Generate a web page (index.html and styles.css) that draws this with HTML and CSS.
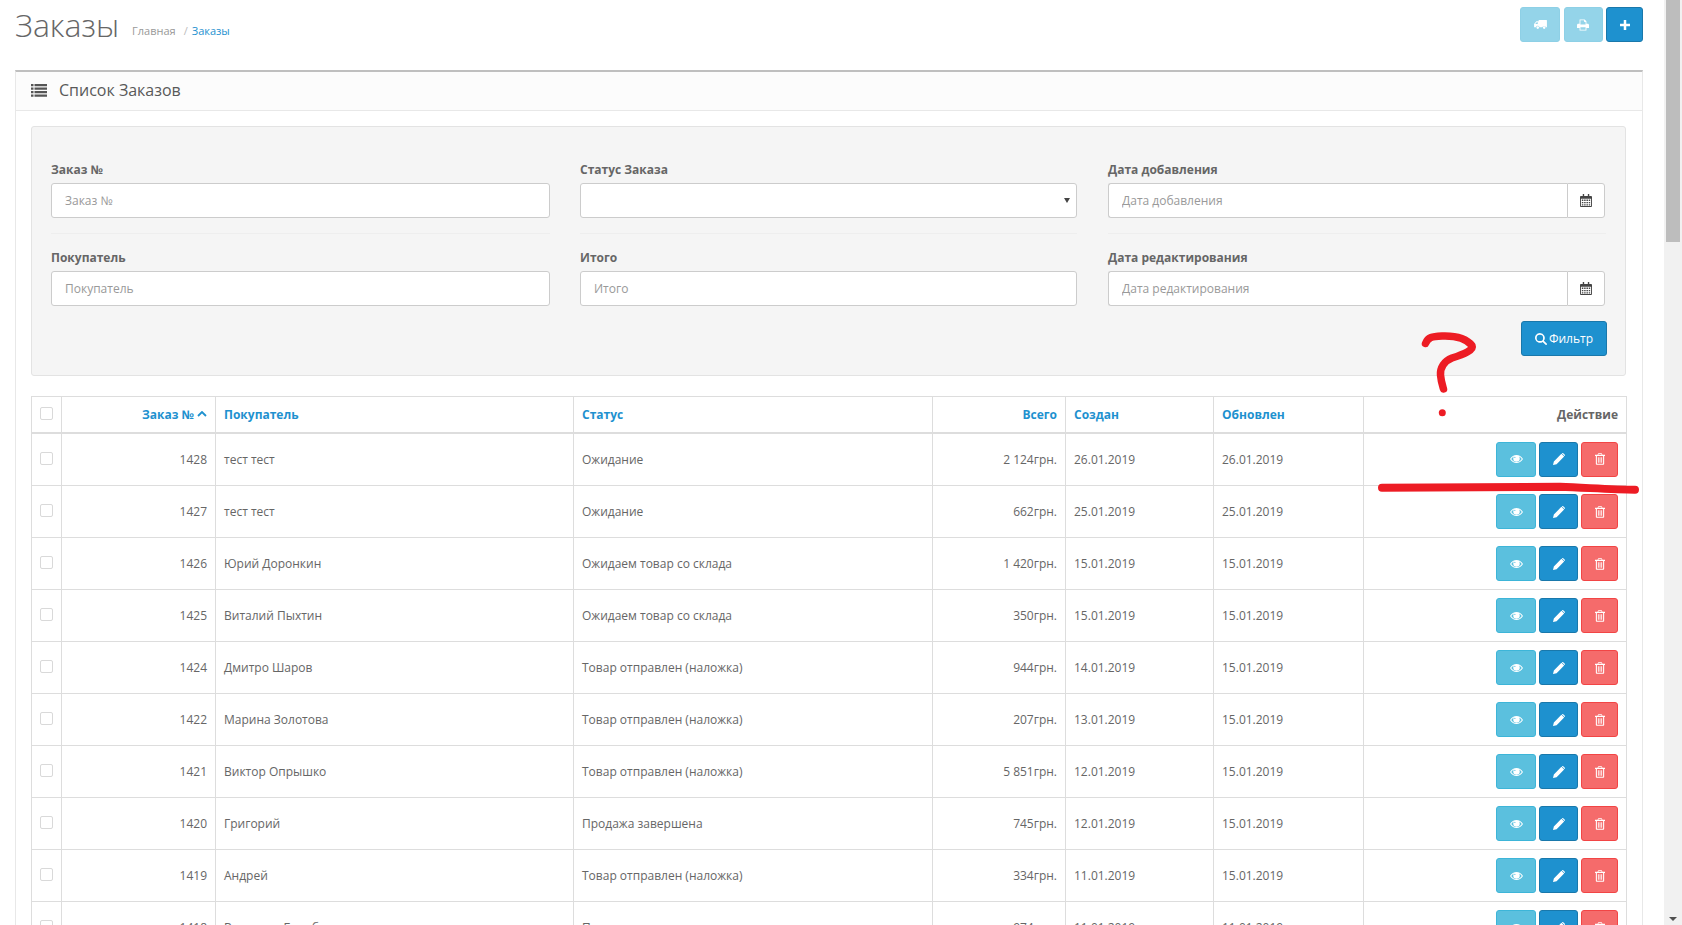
FILE: index.html
```html
<!DOCTYPE html>
<html lang="ru">
<head>
<meta charset="utf-8">
<title>Заказы</title>
<link rel="stylesheet" href="styles.css">
</head>
<body>
<svg width="0" height="0" class="defs">
  <symbol id="i-eye" viewBox="0 0 16 12"><path fill-rule="evenodd" d="M0 6C2 2.6 4.8 1 8 1s6 1.6 8 5c-2 3.400-4.800 5-8 5S2 9.400 0 6zm1.500 0C3 8.500 5.300 9.800 8 9.800S13 8.500 14.500 6c-.9-1.400-2-2.400-3.300-3 .5.700.8 1.500.8 2.300A4 4 0 0 1 8 9.300a4 4 0 0 1-4-4c0-.8.300-1.600.8-2.300C3.500 3.600 2.400 4.600 1.500 6zM6 3.300a.7.700 0 0 0 0 1.400.7.700 0 0 0 0-1.400z"/></symbol>
  <symbol id="i-pencil" viewBox="0 0 14 14"><path d="M0 14l1-4.200L9.800 1l3.200 3.200L4.200 13zM10.700.2c.4-.3.900-.3 1.200 0l1.900 1.900c.3.300.3.800 0 1.200l-.3.300-3.100-3.100z"/></symbol>
  <symbol id="i-trash" viewBox="0 0 12 14"><path fill-rule="evenodd" d="M4 0h4l1 2h3v1.300h-1V13c0 .6-.4 1-1 1H2c-.6 0-1-.4-1-1V3.300H0V2h3zm.4 1L4 2h4l-.4-1zM2.300 3.300v9.400h7.400V3.300zM3.500 5h1v6.500h-1zm2 0h1v6.500h-1zm2 0h1v6.500h-1z"/></symbol>
  <symbol id="i-truck" viewBox="0 0 14 12"><path d="M5 1h8.500c.3 0 .5.200.5.500V9h-1.100a2 2 0 0 0-3.800 0H5.900A2 2 0 0 0 2 9H0V5.500L2.500 2.500H5zM1.200 5.500H4V3.500H2.900zM4 8a1.400 1.400 0 1 1 0 2.800A1.400 1.400 0 0 1 4 8zm7 0a1.400 1.400 0 1 1 0 2.800A1.400 1.400 0 0 1 11 8z"/></symbol>
  <symbol id="i-print" viewBox="0 0 14 13"><path fill-rule="evenodd" d="M3 0h6l2 2v3h1.500c.8 0 1.500.7 1.500 1.500V10h-3v3H3v-3H0V6.500C0 5.700.7 5 1.500 5H3zm1 1v5h6V3H8.500L8 1zM4 9v3h6V9z"/></symbol>
  <symbol id="i-plus" viewBox="0 0 12 12"><path d="M4.500 0h3v4.500H12v3H7.500V12h-3V7.500H0v-3h4.500z"/></symbol>
  <symbol id="i-cal" viewBox="0 0 13 14"><path fill-rule="evenodd" d="M3 0h1.500v2h4V0H10v2h2c.6 0 1 .4 1 1v10c0 .6-.4 1-1 1H1c-.6 0-1-.4-1-1V3c0-.6.4-1 1-1h2zM1 5v8h11V5zm1 1h1.600v1.500H2zm2.500 0h1.600v1.500H4.500zm2.500 0h1.600v1.500H7zm2.500 0H11v1.500H9.500zM2 8.500h1.600V10H2zm2.500 0h1.600V10H4.500zm2.500 0h1.600V10H7zm2.500 0H11V10H9.500zM2 11h1.600v1.300H2zm2.500 0h1.600v1.300H4.500zm2.500 0h1.600v1.300H7zm2.500 0H11v1.300H9.500z"/></symbol>
  <symbol id="i-list" viewBox="0 0 16 13"><path d="M0 0h2.500v2.300H0zm3.500 0H16v2.300H3.500zM0 3.500h2.500v2.300H0zm3.500 0H16v2.300H3.500zM0 7h2.500v2.300H0zM3.500 7H16v2.300H3.500zM0 10.500h2.500v2.300H0zm3.500 0H16v2.300H3.500z"/></symbol>
  <symbol id="i-search" viewBox="0 0 13 13"><path fill-rule="evenodd" d="M5.300 0a5.300 5.300 0 0 1 4.300 8.400l3.100 3.100c.4.400.4 1 0 1.300-.4.300-.9.300-1.300 0L8.300 9.700A5.300 5.300 0 1 1 5.300 0zm0 1.800a3.500 3.500 0 1 0 0 7 3.500 3.500 0 0 0 0-7z"/></symbol>
</svg>

<div class="app">
  <main class="main">
    <header class="page-header">
      <div class="title-wrap">
        <h1 class="title">Заказы</h1>
        <ul class="crumbs">
          <li class="crumb">Главная</li>
          <li class="crumb-sep">/</li>
          <li class="crumb-link">Заказы</li>
        </ul>
      </div>
      <div class="head-actions">
        <button class="btn btn-faded btn-w40"><svg class="ic ic-truck"><use href="#i-truck"/></svg></button>
        <button class="btn btn-faded btn-w39"><svg class="ic ic-print"><use href="#i-print"/></svg></button>
        <button class="btn btn-primary btn-w37"><svg class="ic ic-plus"><use href="#i-plus"/></svg></button>
      </div>
    </header>

    <section class="panel">
      <div class="panel-heading">
        <svg class="ic-list"><use href="#i-list"/></svg>
        <h3 class="panel-title">Список Заказов</h3>
      </div>
      <div class="panel-body">
        <form class="well">
          <div class="filter-grid">
            <div class="field">
              <label class="label">Заказ №</label>
              <input class="input" placeholder="Заказ №">
            </div>
            <div class="field">
              <label class="label">Статус Заказа</label>
              <div class="select"><span class="caret"></span></div>
            </div>
            <div class="field">
              <label class="label">Дата добавления</label>
              <div class="input-group">
                <input class="input input-in-group" placeholder="Дата добавления">
                <span class="addon"><svg class="ic-cal"><use href="#i-cal"/></svg></span>
              </div>
            </div>
            <div class="field field-last">
              <label class="label">Покупатель</label>
              <input class="input" placeholder="Покупатель">
            </div>
            <div class="field field-last">
              <label class="label">Итого</label>
              <input class="input" placeholder="Итого">
            </div>
            <div class="field field-last">
              <label class="label">Дата редактирования</label>
              <div class="input-group">
                <input class="input input-in-group" placeholder="Дата редактирования">
                <span class="addon"><svg class="ic-cal"><use href="#i-cal"/></svg></span>
              </div>
            </div>
          </div>
          <div class="filter-foot">
            <button type="button" class="btn btn-primary btn-filter"><svg class="ic-search"><use href="#i-search"/></svg>Фильтр</button>
          </div>
        </form>

        <table class="table">
          <colgroup>
            <col class="c-check"><col class="c-id"><col class="c-name"><col class="c-status"><col class="c-total"><col class="c-date"><col class="c-date2"><col class="c-act">
          </colgroup>
          <thead>
            <tr>
              <th class="t-check"><span class="check"></span></th>
              <th class="t-right"><a class="sort">Заказ № <svg class="ic-up" viewBox="0 0 10 6"><path d="M1 5l4-4 4 4" fill="none" stroke="currentColor" stroke-width="1.800"/></svg></a></th>
              <th><a class="sort">Покупатель</a></th>
              <th><a class="sort">Статус</a></th>
              <th class="t-right"><a class="sort">Всего</a></th>
              <th><a class="sort">Создан</a></th>
              <th><a class="sort">Обновлен</a></th>
              <th class="t-right">Действие</th>
            </tr>
          </thead>
          <tbody id="rows"></tbody>
        </table>
      </div>
    </section>
  </main>
  <aside class="scrollbar">
    <div class="thumb"></div>
    <div class="arrow"></div>
  </aside>
</div>

<svg class="scribble" viewBox="0 0 1682 925" width="1682" height="925">
  <path class="ink" d="M1425.500 343.500C1428 337 1432 336.500 1442 336C1456 335.500 1466 338 1472 345.500C1474 350 1464 354 1452 358C1444 361 1440 368 1440.500 375C1441 381 1442 384 1443.500 389"/>
  <circle class="dot" cx="1442.300" cy="412.700" r="3.500"/>
  <path class="ink ink-line" d="M1382 487.700L1560 486.800C1590 488 1615 489.500 1635 489.800"/>
</svg>

<script src="rows.js"></script>
</body>
</html>
```

FILE: rows.js
```js
var data = [
  ["1428","тест тест","Ожидание","2 124грн.","26.01.2019","26.01.2019"],
  ["1427","тест тест","Ожидание","662грн.","25.01.2019","25.01.2019"],
  ["1426","Юрий Доронкин","Ожидаем товар со склада","1 420грн.","15.01.2019","15.01.2019"],
  ["1425","Виталий Пыхтин","Ожидаем товар со склада","350грн.","15.01.2019","15.01.2019"],
  ["1424","Дмитро Шаров","Товар отправлен (наложка)","944грн.","14.01.2019","15.01.2019"],
  ["1422","Марина Золотова","Товар отправлен (наложка)","207грн.","13.01.2019","15.01.2019"],
  ["1421","Виктор Опрышко","Товар отправлен (наложка)","5 851грн.","12.01.2019","15.01.2019"],
  ["1420","Григорий","Продажа завершена","745грн.","12.01.2019","15.01.2019"],
  ["1419","Андрей","Товар отправлен (наложка)","334грн.","11.01.2019","15.01.2019"],
  ["1418","Валентин Барабаш","Продажа завершена","974грн.","11.01.2019","11.01.2019"]
];
var html = "";
data.forEach(function (r) {
  html += '<tr><td class="t-check"><span class="check"></span></td>' +
    '<td class="t-right">' + r[0] + '</td><td>' + r[1] + '</td><td>' + r[2] + '</td>' +
    '<td class="t-right">' + r[3] + '</td><td>' + r[4] + '</td><td>' + r[5] + '</td>' +
    '<td class="t-actions"><div class="actions">' +
    '<button class="btn btn-info btn-w40"><svg class="ic ic-eye"><use href="#i-eye"/></svg></button>' +
    '<button class="btn btn-primary btn-w39"><svg class="ic ic-pencil"><use href="#i-pencil"/></svg></button>' +
    '<button class="btn btn-danger btn-w37"><svg class="ic ic-trash"><use href="#i-trash"/></svg></button>' +
    '</div></td></tr>';
});
document.getElementById("rows").innerHTML = html;
```

FILE: styles.css
```css
* { box-sizing: border-box; }
html, body { margin: 0; height: 925px; overflow: hidden; background: #fff; }
body { font-family: "Open Sans", "Noto Sans", sans-serif; font-size: 12px; color: #666; }
.defs { position: absolute; }
.app { display: flex; height: 925px; overflow: hidden; }
.main { width: 1664px; padding: 0 21px 0 15px; flex: none; overflow: hidden; }

.page-header { height: 70px; display: flex; justify-content: space-between; padding-top: 7px; }
.title-wrap { display: flex; align-items: flex-start; }
.title { margin: 0 13px 0 0; font-size: 32px; font-weight: 300; line-height: 36px; color: #666; }
.crumbs { display: flex; list-style: none; margin: 16px 0 0; padding: 0; font-size: 11px; line-height: 16px; color: #999; }
.crumb-sep { margin: 0 4px 0 8px; color: #bbb; }
.crumb-link { color: #1e91cf; }
.head-actions { display: flex; gap: 3.500px; }

.btn { display: inline-flex; align-items: center; justify-content: center; height: 35px; padding: 0; border: 1px solid; border-radius: 3px; color: #fff; font: inherit; }
.btn-w40 { width: 40px; }
.btn-w39 { width: 39px; }
.btn-w37 { width: 37px; }
.btn-faded { background: #94d4e9; border-color: #8ed0e6; }
.btn-primary { background: #1e91cf; border-color: #1978ab; }
.btn-info { background: #5bc0de; border-color: #3db5d8; }
.btn-danger { background: #f56b6b; border-color: #f24545; }
.ic { fill: #fff; display: block; }
.ic-truck { width: 13px; height: 11px; }
.ic-print { width: 12px; height: 12px; }
.ic-plus { width: 10px; height: 10px; }
.ic-eye { width: 13px; height: 10px; }
.ic-pencil { width: 12px; height: 12px; }
.ic-trash { width: 10px; height: 12px; }

.panel { border: 1px solid #e8e8e8; border-top: 2px solid #bfbfbf; height: 1200px; }
.panel-heading { height: 39px; display: flex; align-items: center; padding: 0 0 2px 15px; background: #fcfcfc; border-bottom: 1px solid #e8e8e8; }
.ic-list { width: 16px; height: 13px; fill: #555; margin-right: 12px; }
.panel-title { margin: 0; font-size: 16px; font-weight: 400; color: #595959; }
.panel-body { padding: 15px 16px 15px 15px; }

.well { background: #f5f5f5; border: 1px solid #e3e3e3; border-radius: 3px; height: 250px; padding: 34px 18px 19px 19px; }
.filter-grid { display: grid; grid-template-columns: 499px 497px 499px; column-gap: 30px; }
.field { padding-bottom: 15px; border-bottom: 1px solid #eeeeee; margin-bottom: 15px; }
.field:nth-child(3n) { margin-left: 1px; }
.field-last { padding-bottom: 0; border-bottom: 0; margin-bottom: 0; }
.label { display: block; font-weight: 700; font-size: 12px; line-height: 17px; color: #666; margin-bottom: 5px; }
.input { display: block; width: 100%; height: 35px; padding: 0 13px; border: 1px solid #ccc; border-radius: 3px; background: #fff; font: inherit; color: #555; outline: 0; }
.input::placeholder { color: #999; opacity: 1; }
.select { position: relative; height: 35px; border: 1px solid #ccc; border-radius: 3px; background: #fff; }
.caret { position: absolute; right: 6px; top: 14px; border: 3.500px solid transparent; border-top: 5px solid #444; border-bottom: 0; }
.input-group { display: flex; width: 497px; }
.input-in-group { flex: 1; min-width: 0; border-radius: 3px 0 0 3px; border-right: 0; }
.addon { width: 38px; flex: none; height: 35px; border: 1px solid #ccc; border-radius: 0 3px 3px 0; background: #fff; display: flex; align-items: center; justify-content: center; }
.ic-cal { width: 12px; height: 13px; fill: #444; }
.filter-foot { display: flex; justify-content: flex-end; margin-top: 15px; }
.btn-filter { width: 86px; gap: 2px; font-size: 12px; }
.ic-search { width: 12px; height: 12px; fill: #fff; }

.table { border-collapse: collapse; table-layout: fixed; width: 1595px; margin-top: 20px; }
.c-check { width: 30px; } .c-id { width: 154px; } .c-name { width: 358px; } .c-status { width: 359px; }
.c-total { width: 133px; } .c-date { width: 148px; } .c-date2 { width: 150px; } .c-act { width: 263px; }
th, td { border: 1px solid #ddd; padding: 0 8px; text-align: left; font-size: 12px; }
thead th { height: 36px; border-bottom: 2px solid #ddd; font-weight: 700; color: #666; }
tbody td { height: 52px; font-weight: 400; color: #666; }
tbody tr:first-child td { height: 53px; }
.t-right { text-align: right; }
.t-check { padding: 0 0 0 8px; }
.check { display: block; width: 13px; height: 13px; border: 1px solid #d9d9d9; border-radius: 2px; background: #fff; margin-top: -2px; }
.sort { color: #1e91cf; }
.ic-up { width: 10px; height: 6px; display: inline-block; vertical-align: 2px; }
.actions { display: flex; justify-content: flex-end; gap: 3px; }

.scrollbar { width: 18px; flex: none; height: 925px; background: #f1f1f1; position: relative; }
.thumb { width: 14px; height: 242px; margin-left: 2px; background: #bdbdbd; }
.arrow { position: absolute; left: 5px; bottom: 4px; border: 4px solid transparent; border-top: 4px solid #505050; border-bottom: 0; }

.scribble { position: absolute; left: 0; top: 0; pointer-events: none; }
.ink { fill: none; stroke: #ed1c24; stroke-width: 7.500; stroke-linecap: round; stroke-linejoin: round; }
.ink-line { stroke-width: 8; }
.dot { fill: #ed1c24; }
```
